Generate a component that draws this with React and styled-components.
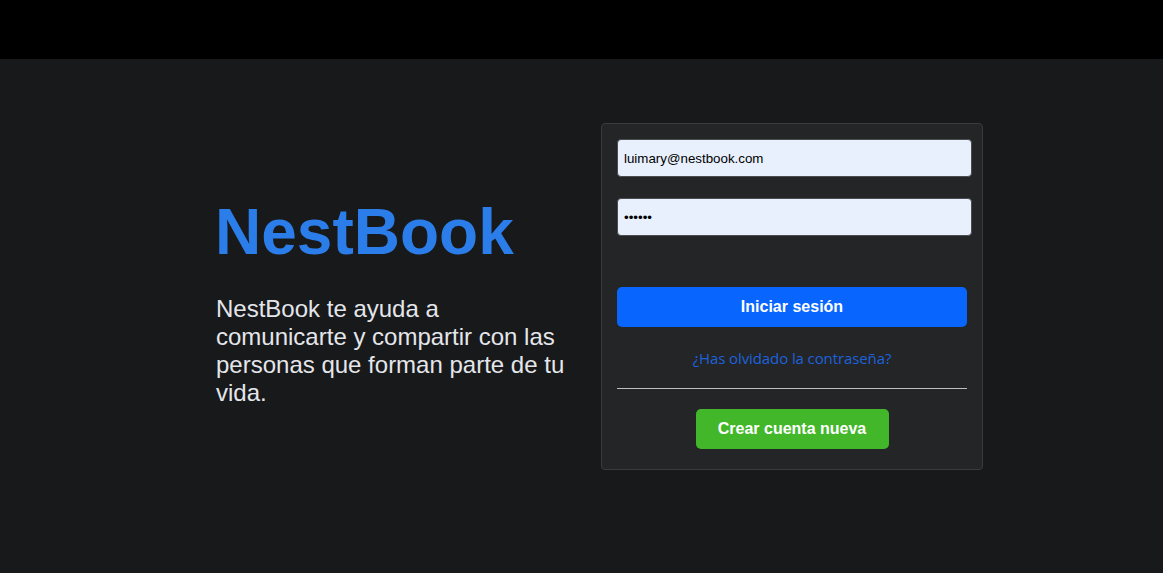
import React from "react";
import styled, { createGlobalStyle } from "styled-components";

const Global = createGlobalStyle`
  * { box-sizing: border-box; }
  html, body { margin: 0; padding: 0; background: #18191a; }
  body { font-family: "Liberation Sans", Arial, sans-serif; }
`;

const Page = styled.div`
  min-height: 573px;
  background: #18191a;
  display: flex;
  flex-direction: column;
`;

const TopBar = styled.header`
  height: 59px;
  background: #000000;
`;

const Main = styled.main`
  display: flex;
  align-items: flex-start;
  padding: 64px 0 0 215px;
`;

const Intro = styled.section`
  width: 366px;
  margin-right: 20px;
  padding-top: 77px;
`;

const Brand = styled.h1`
  margin: 0;
  font-family: "Liberation Sans", Arial, sans-serif;
  font-weight: 700;
  font-size: 64px;
  line-height: 64px;
  color: #2b7de9;
`;

const Tagline = styled.p`
  margin: 31px 0 0 1px;
  max-width: 354px;
  font-family: "Liberation Sans", Arial, sans-serif;
  font-size: 24px;
  line-height: 28px;
  color: #e4e6eb;
`;

const Card = styled.form`
  width: 382px;
  background: #242526;
  border: 1px solid #3a3b3c;
  border-radius: 4px;
  padding: 15px 15px 20px 15px;
  display: flex;
  flex-direction: column;
  align-items: stretch;
`;

const Field = styled.input`
  width: 355px;
  height: 38px;
  margin: ${(p) => p.$mt || 0}px 0 0 0;
  padding: 0 6px;
  border: 1px solid #4a4c4f;
  border-radius: 4px;
  background: #e8f0fe;
  color: #000;
  font-family: "Liberation Sans", Arial, sans-serif;
  font-size: 13.33px;
  outline: none;
`;

const Button = styled.button`
  height: 40px;
  border: none;
  border-radius: 5px;
  background: ${(p) => p.$bg};
  color: #ffffff;
  font-family: "Liberation Sans", Arial, sans-serif;
  font-weight: 700;
  font-size: 16px;
  cursor: pointer;
  width: ${(p) => (p.$w ? p.$w + "px" : "100%")};
  align-self: ${(p) => (p.$w ? "center" : "stretch")};
  margin-top: ${(p) => p.$mt || 0}px;
`;

const Forgot = styled.a`
  display: block;
  margin-top: 21px;
  height: 20px;
  line-height: 20px;
  text-align: center;
  font-family: "Open Sans", "Noto Sans", sans-serif;
  font-size: 15px;
  letter-spacing: -0.1px;
  color: #1d62dc;
  text-decoration: none;
`;

const Divider = styled.hr`
  margin: 20px 0 0 0;
  border: none;
  height: 1px;
  background: #bcc0c4;
`;

export default function App() {
  return (
    <Page>
      <Global />
      <TopBar />
      <Main>
        <Intro>
          <Brand>NestBook</Brand>
          <Tagline>
            NestBook te ayuda a comunicarte y compartir con las personas que
            forman parte de tu vida.
          </Tagline>
        </Intro>
        <Card onSubmit={(e) => e.preventDefault()}>
          <Field type="email" defaultValue="luimary@nestbook.com" />
          <Field type="password" defaultValue="123456" $mt={21} />
          <Button type="submit" $bg="#0866ff" $mt={51}>
            Iniciar sesión
          </Button>
          <Forgot href="#">¿Has olvidado la contraseña?</Forgot>
          <Divider />
          <Button type="button" $bg="#42b72a" $w={193} $mt={20}>
            Crear cuenta nueva
          </Button>
        </Card>
      </Main>
    </Page>
  );
}
